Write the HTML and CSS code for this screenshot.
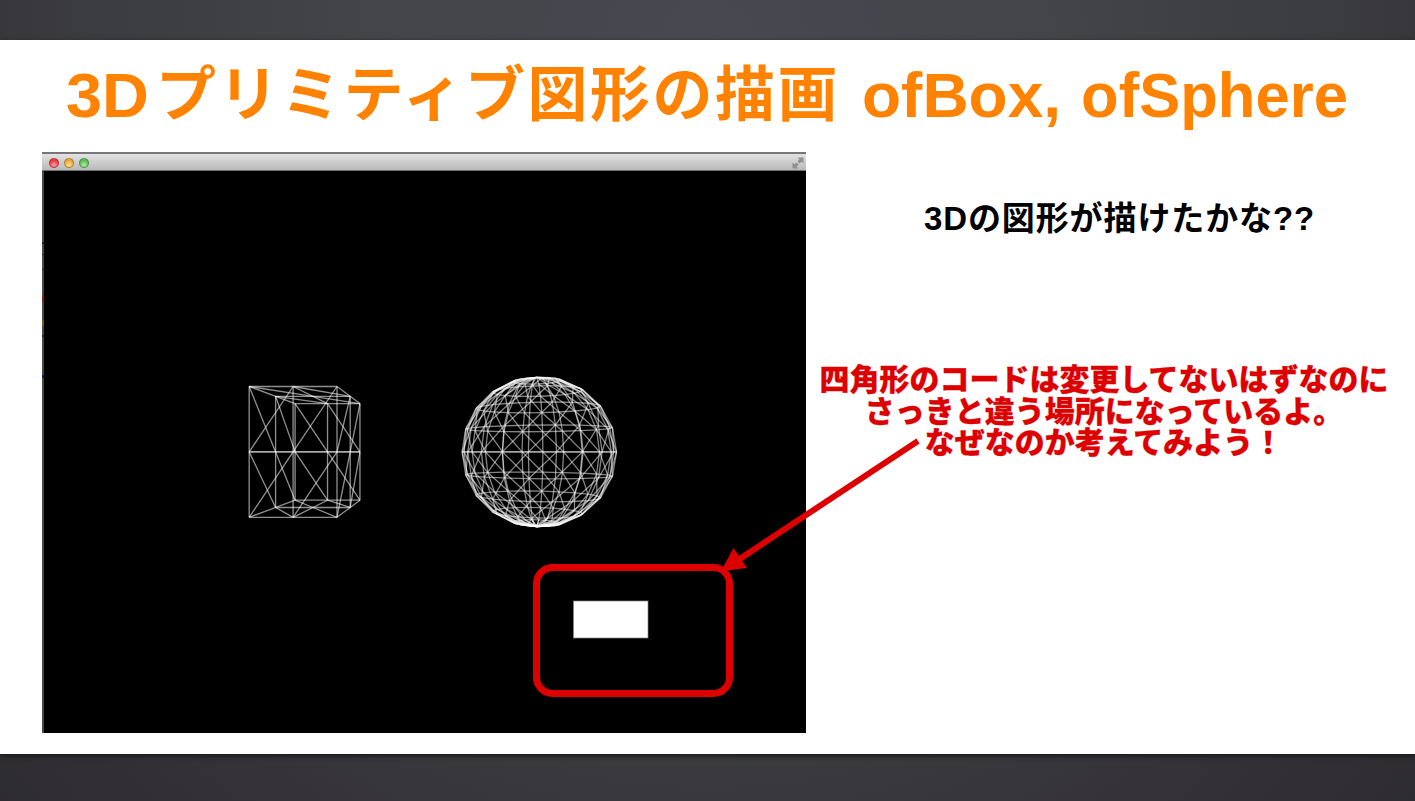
FILE: index.html
```html
<!DOCTYPE html>
<html lang="ja">
<head>
<meta charset="utf-8">
<title>3Dプリミティブ図形の描画</title>
<link rel="stylesheet" href="styles.css">
</head>
<body>
<main class="slide">
  <h1 class="title"><svg class="fit" width="1415" height="112"><text x="66" y="77" textLength="83" lengthAdjust="spacingAndGlyphs">3D</text><text class="kana" x="156" y="76">プリミティブ図形の描画</text><text x="862" y="77" textLength="199" lengthAdjust="spacingAndGlyphs">ofBox,</text><text x="1081" y="77" textLength="267" lengthAdjust="spacingAndGlyphs">ofSphere</text></svg></h1>
  <div class="content">
    <section class="window">
      <header class="bar">
        <i class="dot red"></i><i class="dot amber"></i><i class="dot green"></i>
        <svg class="expand" width="12" height="12" viewBox="0 0 12 12"><path d="M5.500 .5h6v6L9.700 4.700 7.500 6.500 5.500 4.500 7.300 2.300zM.5 5.500l1.800 1.800L4.500 5.500 6.500 7.500 4.700 9.700 6.500 11.500H.5z"/></svg>
      </header>
      <svg class="scene" width="764" height="562" viewBox="42 171 764 562">
        <path class="edge" d="M43 171V733"/>
        <path class="edge dark" d="M43 242v2M43 254v1M43 269v1M43 335v2"/>
        <path class="edge rust" d="M43 295v6"/>
        <path class="edge gold" d="M43 320v6"/>
        <path class="edge navy" d="M43 375v3"/>
        <g id="box" class="wire"></g>
        <g id="sphere" class="wire ball"></g>
        <rect class="rect" x="573.500" y="601" width="74.500" height="37"/>
      </svg>
    </section>
    <section class="notes">
      <p class="question">3Dの図形が描けたかな??</p>
      <p class="hint">四角形のコードは変更してないはずなのに<br>さっきと違う場所になっているよ。<br>なぜなのか考えてみよう！</p>
    </section>
  </div>
</main>
<svg class="callout" width="1415" height="801">
  <rect x="536.500" y="567.500" width="193" height="126" rx="16"/>
  <path d="M918 441L738 560"/>
  <path class="head" d="M721 571L733.500 548 747 568z"/>
</svg>
<script src="scene.js"></script>
</body>
</html>
```
FILE: styles.css
```css
* { box-sizing: border-box; }
body { margin: 0; height: 801px; overflow: hidden; padding-top: 40px; position: relative;
  font-family: "Liberation Sans", "Noto Sans CJK JP", sans-serif; font-weight: 700;
  background: radial-gradient(ellipse 1100px 1200px at 50% 50px, #484851 0%, #434448 32%, #3b3c40 56%, #353339 72%, #29282c 100%); }
.slide { height: 714px; background: #fff; box-shadow: 0 2px 5px #171719; }
.title { margin: 0; height: 112px; }
.fit { display: block; fill: #ff8200; font-size: 63px; }
.fit .kana { font-size: 60px; letter-spacing: 2.500px; }
.content { display: flex; padding-left: 42px; }
.window { width: 764px; height: 581px; background: #000; }
.bar { height: 19px; display: flex; align-items: center; gap: 5px; padding: 1px 2px 0 7px;
  border-top: 2px solid #77777a; border-bottom: 1px solid #707070; background: linear-gradient(#e3e3e3, #b9b9b9); }
.dot { width: 10px; height: 10px; border-radius: 50%; border: 1px solid #0004; }
.red { background: radial-gradient(circle at 50% 75%, #ffa0a0, #e83840 65%); }
.amber { background: radial-gradient(circle at 50% 75%, #ffe68a, #e9a43b 65%); }
.green { background: radial-gradient(circle at 50% 75%, #b0f0a0, #5dba55 65%); }
.expand { margin-left: auto; fill: #909090; }
.scene { display: block; }
.edge { stroke: #48494b; stroke-width: 2; }
.dark { stroke: #222; }
.rust { stroke: #7a2410; }
.gold { stroke: #7a5a10; }
.navy { stroke: #0a2048; }
.wire { fill: none; stroke: #fff; stroke-opacity: .56; stroke-width: 1.300; }
.ball { stroke-opacity: .52; }
.rect { fill: #fff; stroke: #888; stroke-width: .7; }
.notes { width: 596px; text-align: center; }
.question { margin: 47px 0 0 31px; font-size: 33px; line-height: 40px; letter-spacing: .9px; white-space: nowrap; }
.hint { margin: 125px 0 0; font-size: 29.900px; line-height: 31.500px; letter-spacing: .1px; font-weight: 900;
  color: #dc0000; -webkit-text-stroke: .3px #dc0000; white-space: nowrap; }
.callout { position: absolute; left: 0; top: 0; fill: none; stroke: #dc0000; stroke-width: 7; }
.callout path { stroke-width: 6; }
.callout .head { fill: #dc0000; stroke: none; }
```
FILE: scene.js
```js
const SCALE = 0.746, EYE = 665;
const project = (x, y, z) => {
  const s = SCALE * EYE / (EYE - z);
  return (424.800 + x * s).toFixed(2) + ' ' + (451.900 + y * s).toFixed(2);
};
// One path per segment, so that overlapping lines add up in brightness.
const line = (a, b) => '<path d="M' + project(...a) + 'L' + project(...b) + '"/>';

// Box: each face is a 2 x 2 grid of split quads.
function face(at) {
  let d = '';
  for (const u of [-1, 0]) for (const v of [-1, 0]) d += line(at(u, v), at(u + 1, v + 1));
  return d;
}
const P = (x, y, z) => [-150 + x * 50, y * 74.500, z * 100];
let box = face((u, v) => P(u, -v, 1)) + face((u, v) => P(u, v, -1)) +
  face((u, v) => P(-1, v, -u)) + face((u, v) => P(1, v, u)) +
  face((u, v) => P(u, -1, -v)) + face((u, v) => P(-u, 1, -v));
for (const a of [-1, 0, 1]) for (const b of [-1, 0, 1]) {
  if (!a && !b) continue;
  box += line(P(-1, a, b), P(1, a, b)) + line(P(a, -1, b), P(a, 1, b)) + line(P(a, b, -1), P(a, b, 1));
}
document.getElementById('box').innerHTML = box;

// Sphere: 10 latitude bands, 20 longitude segments.
const S = (i, j) => {
  const t = Math.PI * i / 10, a = Math.PI * j / 10, r = 100 * Math.sin(t);
  return [150 + r * Math.sin(a), -100 * Math.cos(t), r * Math.cos(a)];
};
let ball = '';
for (let i = 0; i < 10; i++) for (let j = 0; j < 20; j++) {
  ball += line(S(i, j), S(i + 1, j));
  if (i > 0) ball += line(S(i, j), S(i, j + 1)) + line(S(i, j + 1), S(i + 1, j));
}
document.getElementById('sphere').innerHTML = ball;
```
